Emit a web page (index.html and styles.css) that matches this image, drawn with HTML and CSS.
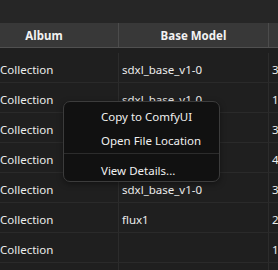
FILE: index.html
```html
<!DOCTYPE html>
<html>
<head>
<meta charset="utf-8">
<link rel="stylesheet" href="styles.css">
</head>
<body>
<div class="page">
  <div class="topbar"></div>
  <div class="table">
    <div class="thead">
      <div class="th th-album">Album</div>
      <div class="th th-model">Base Model</div>
      <div class="th th-x"></div>
    </div>
    <div class="tbody">
      <div class="row"><div class="td c1">Collection</div><div class="td c2">sdxl_base_v1-0</div><div class="td c3">3</div></div>
      <div class="row"><div class="td c1">Collection</div><div class="td c2">sdxl_base_v1-0</div><div class="td c3">1</div></div>
      <div class="row"><div class="td c1">Collection</div><div class="td c2">sdxl_base_v1-0</div><div class="td c3">3</div></div>
      <div class="row"><div class="td c1">Collection</div><div class="td c2">sdxl_base_v1-0</div><div class="td c3">4</div></div>
      <div class="row"><div class="td c1">Collection</div><div class="td c2">sdxl_base_v1-0</div><div class="td c3">3</div></div>
      <div class="row"><div class="td c1">Collection</div><div class="td c2">flux1</div><div class="td c3">2</div></div>
      <div class="row"><div class="td c1">Collection</div><div class="td c2"></div><div class="td c3">1</div></div>
      <div class="row"><div class="td c1"></div><div class="td c2"></div><div class="td c3"></div></div>
    </div>
  </div>
  <div class="menu">
    <div class="item">Copy to ComfyUI</div>
    <div class="item">Open File Location</div>
    <div class="sep"></div>
    <div class="item">View Details...</div>
  </div>
</div>
</body>
</html>
```
FILE: styles.css
```css
html, body {
  margin: 0;
  padding: 0;
  background: #1f1f1f;
}
.page {
  position: relative;
  width: 278px;
  height: 270px;
  overflow: hidden;
  font-family: "Noto Sans", "Open Sans", sans-serif;
  font-size: 11.5px;
  color: #ececec;
}
.topbar {
  height: 23px;
  background: #262626;
}
.table {
  display: flex;
  flex-direction: column;
}
.thead {
  display: grid;
  grid-template-columns: 119px 150px 20px;
  height: 24px;
  background: #383838;
  border-bottom: 1px solid #505050;
}
.th {
  display: flex;
  align-items: center;
  justify-content: center;
  padding-top: 1px;
  font-weight: 700;
  color: #f2f2f2;
  border-right: 1px solid #4c4c4c;
}
.th-album {
  padding-right: 30px;
}
.tbody {
  padding-top: 5px;
}
.row {
  display: grid;
  grid-template-columns: 119px 150px 20px;
  height: 29px;
  border-bottom: 1px solid #2a2a2a;
}
.td {
  display: flex;
  align-items: center;
  padding-top: 4px;
  white-space: nowrap;
  overflow: hidden;
  border-right: 1px solid #2c2c2c;
}
.c2 {
  padding-left: 3px;
}
.c3 {
  padding-left: 3px;
}
.menu {
  position: absolute;
  left: 63px;
  top: 101px;
  width: 155px;
  padding: 1px 0 0;
  background: #111111;
  border: 1px solid #3c3c3c;
  border-radius: 7px;
  box-shadow: 0 2px 6px rgba(0,0,0,0.4);
}
.item {
  height: 24px;
  display: flex;
  align-items: center;
  padding-top: 2px;
  box-sizing: border-box;
  padding-left: 37px;
  color: #f0f0f0;
}
.sep {
  height: 1px;
  background: #2c2c2c;
  margin: 2px 0 3px;
}
```
